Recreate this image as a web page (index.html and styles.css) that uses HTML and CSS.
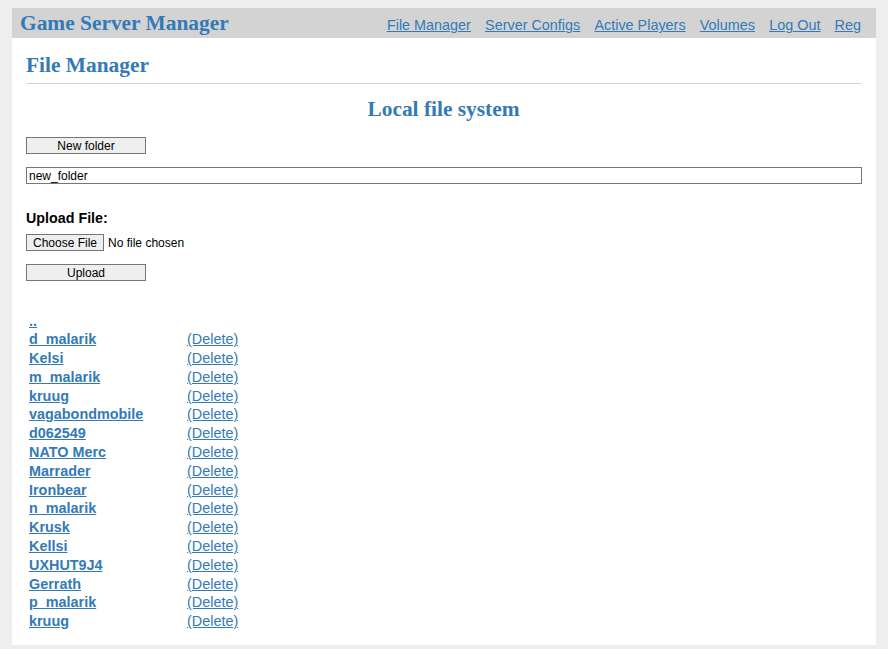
FILE: index.html
```html
<!DOCTYPE html>
<html lang="en">
<head>
<meta charset="utf-8">
<title>Game Server Manager - File Manager</title>
<link rel="stylesheet" href="styles.css">
</head>
<body>
<div class="page">
  <header class="topbar">
    <a class="brand">Game Server Manager</a>
    <nav class="nav">
      <a href="#">File Manager</a>
      <a href="#">Server Configs</a>
      <a href="#">Active Players</a>
      <a href="#">Volumes</a>
      <a href="#">Log Out</a>
      <a href="#">Reg</a>
    </nav>
  </header>
  <main class="content">
    <h2 class="page-title">File Manager</h2>
    <hr class="rule">
    <h2 class="section-title">Local file system</h2>
    <button class="btn" type="button">New folder</button>
    <input class="text-input" type="text" value="new_folder">
    <div class="upload-label">Upload File:</div>
    <input class="file-input" type="file">
    <button class="btn btn-upload" type="button">Upload</button>
    <table class="files">
      <tr><td class="name"><a href="#">..</a></td><td></td></tr>
      <tr><td class="name"><a href="#">d_malarik</a></td><td><a class="del" href="#">(Delete)</a></td></tr>
      <tr><td class="name"><a href="#">Kelsi</a></td><td><a class="del" href="#">(Delete)</a></td></tr>
      <tr><td class="name"><a href="#">m_malarik</a></td><td><a class="del" href="#">(Delete)</a></td></tr>
      <tr><td class="name"><a href="#">kruug</a></td><td><a class="del" href="#">(Delete)</a></td></tr>
      <tr><td class="name"><a href="#">vagabondmobile</a></td><td><a class="del" href="#">(Delete)</a></td></tr>
      <tr><td class="name"><a href="#">d062549</a></td><td><a class="del" href="#">(Delete)</a></td></tr>
      <tr><td class="name"><a href="#">NATO Merc</a></td><td><a class="del" href="#">(Delete)</a></td></tr>
      <tr><td class="name"><a href="#">Marrader</a></td><td><a class="del" href="#">(Delete)</a></td></tr>
      <tr><td class="name"><a href="#">Ironbear</a></td><td><a class="del" href="#">(Delete)</a></td></tr>
      <tr><td class="name"><a href="#">n_malarik</a></td><td><a class="del" href="#">(Delete)</a></td></tr>
      <tr><td class="name"><a href="#">Krusk</a></td><td><a class="del" href="#">(Delete)</a></td></tr>
      <tr><td class="name"><a href="#">Kellsi</a></td><td><a class="del" href="#">(Delete)</a></td></tr>
      <tr><td class="name"><a href="#">UXHUT9J4</a></td><td><a class="del" href="#">(Delete)</a></td></tr>
      <tr><td class="name"><a href="#">Gerrath</a></td><td><a class="del" href="#">(Delete)</a></td></tr>
      <tr><td class="name"><a href="#">p_malarik</a></td><td><a class="del" href="#">(Delete)</a></td></tr>
      <tr><td class="name"><a href="#">kruug</a></td><td><a class="del" href="#">(Delete)</a></td></tr>
    </table>
  </main>
</div>
</body>
</html>
```
FILE: styles.css
```css
html, body {
  background: #eeeeee;
}
body {
  margin: 8px 12px 5px;
  font-family: "Liberation Sans", Arial, sans-serif;
  color: #000;
}
a {
  color: #337ab7;
}
.page {
  background: #ffffff;
}
.topbar {
  box-sizing: border-box;
  height: 30px;
  padding: 3px 15px 0 8px;
  background: #d3d3d3;
  display: flex;
  justify-content: space-between;
  align-items: baseline;
}
.brand {
  font-family: "Liberation Serif", "Times New Roman", serif;
  font-weight: bold;
  font-size: 21.4px;
  color: #337ab7;
  text-decoration: none;
}
.nav {
  display: flex;
  gap: 14.2px;
  font-size: 14.4px;
}
.content {
  padding: 14.5px 15px 14px 14px;
}
.page-title,
.section-title {
  margin: 0;
  font-family: "Liberation Serif", "Times New Roman", serif;
  font-weight: bold;
  font-size: 21.4px;
  color: #337ab7;
}
.rule {
  margin: 5px 0 0;
  border: 0;
  border-top: 1px solid #d3d3d3;
  height: 0;
}
.section-title {
  margin-top: 13px;
  text-align: center;
}
.btn {
  display: block;
  box-sizing: border-box;
  width: 120px;
  height: 17px;
  margin: 15.5px 0 0;
  padding: 0;
  font-family: "Liberation Sans", Arial, sans-serif;
  font-size: 12px;
  color: #000;
  background: #efefef;
  border: 1px solid #767676;
  border-radius: 0;
}
.text-input {
  display: block;
  box-sizing: border-box;
  width: calc(100% + 1px);
  height: 17px;
  margin: 13px 0 0;
  padding: 0 2px;
  font-family: "Liberation Sans", Arial, sans-serif;
  font-size: 12px;
  color: #000;
  border: 1px solid #767676;
  border-radius: 0;
}
.upload-label {
  margin-top: 26px;
  font-weight: bold;
  font-size: 14.3px;
  line-height: 16px;
}
.file-input {
  display: block;
  box-sizing: border-box;
  height: 17px;
  margin: 8px 0 0;
  padding: 0;
  font-family: "Liberation Sans", Arial, sans-serif;
  font-size: 12px;
  color: #000;
}
.file-input::file-selector-button {
  box-sizing: border-box;
  height: 17px;
  margin: 0 4px 0 0;
  padding: 0 6px;
  font-family: "Liberation Sans", Arial, sans-serif;
  font-size: 12px;
  color: #000;
  background: #efefef;
  border: 1px solid #767676;
  border-radius: 0;
}
.btn-upload {
  margin-top: 13px;
}
.files {
  margin-top: 30.5px;
  border-collapse: collapse;
  font-size: 14.4px;
}
.files td {
  padding: 0 0 0 3px;
  line-height: 18.8px;
  vertical-align: baseline;
}
.files td.name {
  width: 155px;
  font-weight: bold;
}
```
